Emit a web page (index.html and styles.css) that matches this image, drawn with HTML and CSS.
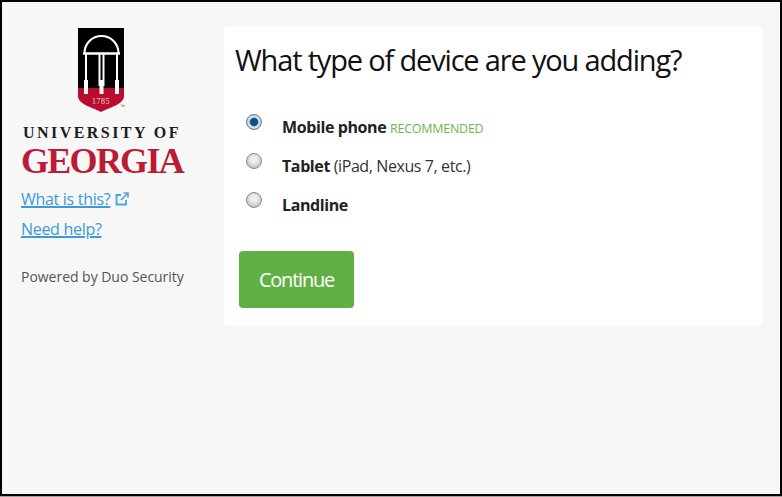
FILE: index.html
```html
<!DOCTYPE html>
<html lang="en">
<head>
<meta charset="utf-8">
<title>Duo enrollment</title>
<link rel="stylesheet" href="styles.css">
</head>
<body>
<div class="frame">
  <aside class="sidebar">
    <div class="logo">
      <svg class="shield" viewBox="0 0 46 84" width="46" height="84" aria-hidden="true">
        <path d="M0 0H46V60H0Z" fill="#000"/>
        <path d="M0 60H46V68C46 76 33 79 23 84C13 79 0 76 0 68Z" fill="#ba0c2f"/>
        <path d="M6.5 25A17 17 0 0 1 40.5 25" fill="none" stroke="#fff" stroke-width="2.2"/>
        <path d="M5 25.500H42" stroke="#fff" stroke-width="2.6"/>
        <path d="M8 25V58M21.500 25V58M25.500 25V58M39 25V58" stroke="#fff" stroke-width="2"/>
        <path d="M8 52V66M23.500 52V66M39 52V66" stroke="#fff" stroke-width="4"/>
        <text x="23" y="76" class="year">1785</text>
        <text x="42" y="80" class="tm">™</text>
      </svg>
      <div class="uni">UNIVERSITY OF</div>
      <div class="georgia">GEORGIA</div>
    </div>
    <p class="side-link first"><a href="#">What is this?</a>
      <svg class="ext" viewBox="0 0 14 14" width="14" height="14" aria-hidden="true">
        <path d="M6 3H1.500V12.500H11V8" fill="none" stroke="#4aa5dc" stroke-width="1.800"/>
        <path d="M6 8L12 2M8.500 1H13V5.500" fill="none" stroke="#4aa5dc" stroke-width="1.600"/>
      </svg>
    </p>
    <p class="side-link"><a href="#">Need help?</a></p>
    <p class="powered">Powered by Duo Security</p>
  </aside>
  <main class="card">
    <h1>What type of device are you adding?</h1>
    <div class="options">
      <div class="option"><span class="radio checked"></span><span class="label"><b>Mobile phone</b> <span class="rec">RECOMMENDED</span></span></div>
      <div class="option"><span class="radio"></span><span class="label"><b>Tablet</b> (iPad, Nexus 7, etc.)</span></div>
      <div class="option"><span class="radio"></span><span class="label"><b>Landline</b></span></div>
    </div>
    <button class="continue" type="button">Continue</button>
  </main>
</div>
</body>
</html>
```

FILE: styles.css
```css
* { box-sizing: border-box; }
html, body { margin: 0; padding: 0; background: #a0a0a0; }
body { height: 497px; overflow: hidden; font-family: "Open Sans", "Liberation Sans", sans-serif; color: #222; }
.frame {
  width: 782px; height: 496px;
  border: 2px solid #000;
  background: #f7f7f7;
  display: flex;
  align-items: flex-start;
  padding: 24px 18px 0 19px;
}
.sidebar { width: 203px; flex: none; }
.logo { width: 164px; display: flex; flex-direction: column; align-items: center; }
.shield { display: block; margin: 2px 4px 0 0; overflow: visible; }
.year { font-family: "Liberation Serif", serif; font-size: 8px; fill: #f3d6dc; text-anchor: middle; letter-spacing: .5px; }
.tm { font-family: "Liberation Sans", sans-serif; font-size: 5px; fill: #555; }
.uni { font-family: "Liberation Serif", serif; font-weight: bold; font-size: 16px; line-height: 18px; letter-spacing: 2.45px; color: #1d1d1d; margin: 12px 2px 0 0; white-space: nowrap; }
.georgia { font-family: "Liberation Serif", serif; font-weight: bold; font-size: 36px; line-height: 34px; letter-spacing: -1.75px; color: #ba1c36; white-space: nowrap; margin: 2px 2px 0 0; }
.side-link { margin: 0; font-size: 16px; line-height: 30px; letter-spacing: -.3px; color: #4aa5dc; display: flex; align-items: center; gap: 5px; }
.side-link a { color: #3a9bd6; text-decoration: underline; text-decoration-thickness: 1.5px; }
.side-link.first { margin-top: 6px; }
.powered { margin: 23px 0 0; font-size: 14px; line-height: 20px; letter-spacing: -.03px; color: #555; }
.card { width: 538px; height: 300px; background: #fff; border-radius: 4px; padding: 14px 11px 0; }
h1 { margin: 0; font-size: 29px; line-height: 40px; font-weight: 400; color: #111; letter-spacing: -1.17px; white-space: nowrap; }
.options { margin-top: 27px; display: flex; flex-direction: column; }
.option { display: flex; align-items: center; height: 39px; padding-left: 11px; }
.radio { width: 16px; height: 16px; border-radius: 50%; flex: none; margin-top: -9px; border: 1px solid #8a8a8a; background: radial-gradient(circle at 50% 40%, #efefef 25%, #aeaeae 100%); }
.radio.checked { border-color: #68798a; background: radial-gradient(circle, #0b4f88 0 3.500px, #dfe6ec 5px, #9aa2a8 100%); }
.label { margin-left: 20px; font-size: 16px; color: #333; white-space: nowrap; letter-spacing: -.4px; }
.label b { color: #222; }
.rec { font-size: 12.500px; color: #69b84f; letter-spacing: -.25px; }
.continue {
  display: block; margin: 27px 0 0 4px; width: 115px; height: 57px;
  background: #61b045; color: #fff; border: 0; border-radius: 4px;
  font: 400 20px "Open Sans", "Liberation Sans", sans-serif;
  letter-spacing: -1.2px;
}
```
